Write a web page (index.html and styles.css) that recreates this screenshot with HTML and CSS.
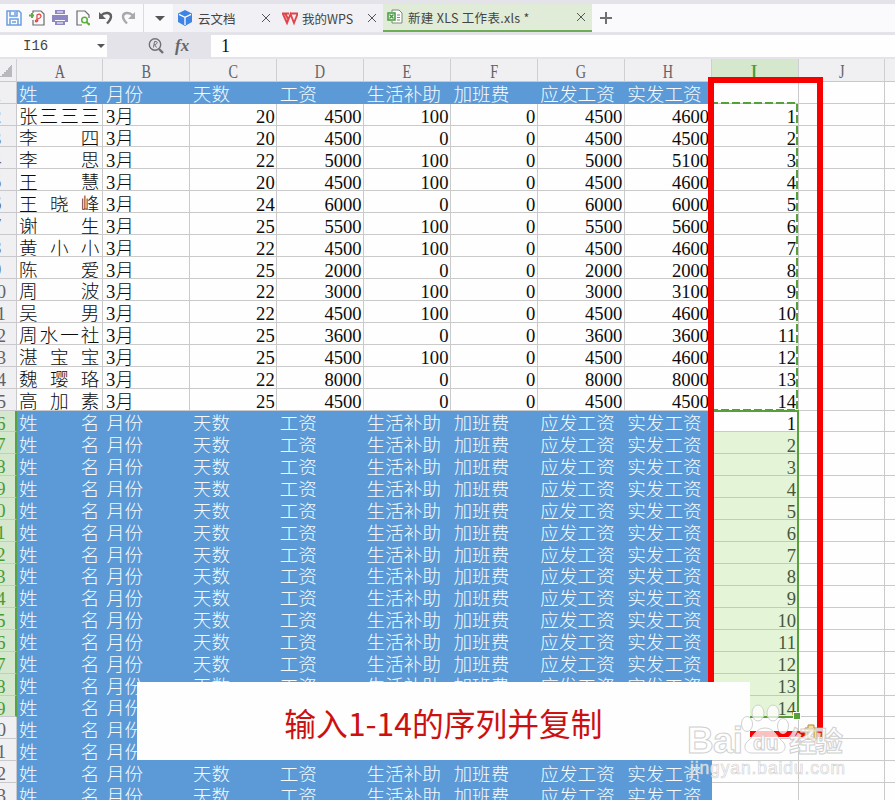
FILE: index.html
```
<!DOCTYPE html>
<html lang="zh">

<head>
  <meta charset="UTF-8">
  <meta name="viewport" content="width=device-width, initial-scale=1.0">
  <title>新建 XLS 工作表.xls</title>
  <link rel="stylesheet" href="styles.css">
</head>

<body>
  <header class="toolbar">
    <div class="tools">
      <svg class="icon" viewBox="0 0 16 16" fill="none" stroke="#6c9fe0" stroke-width="1.5">
        <path d="M1 1h12l2 2v12H1z" />
        <path d="M4 1v5h7V1M9 2v3M4 15v-6h8v6M6 12h4" />
      </svg>
      <svg class="icon" viewBox="0 0 16 16" fill="none" stroke="#6c6c6c" stroke-width="1.2">
        <path d="M4 3V1h8l3 3v11H4v-5" />
        <path d="M0 5.500h5M3 3v5" stroke="#5caf3d" stroke-width="2" />
        <path d="M8 12V5c3-2 5 .5 3.500 2.500C10.500 9 7 9 6.500 10.500S8 13 9 10" stroke="#e0403f" />
      </svg>
      <svg class="icon" viewBox="0 0 16 16" fill="#8d87c4">
        <path d="M3 0h10v4H3zM0 5h16v7h-3v-2H3v2H0zM3 11h10v4H3z" />
        <path d="M5 2h6M5 13h6" stroke="#fff" />
      </svg>
      <svg class="icon" viewBox="0 0 16 16" fill="none" stroke="#6c6c6c" stroke-width="1.2">
        <path d="M7 15H2V1h8l4 4v3M14 13v2" />
        <circle cx="9.500" cy="10" r="2.800" stroke="#5caf3d" stroke-width="1.500" />
        <path d="M11.500 12l3 3" stroke="#5caf3d" stroke-width="2" />
      </svg>
      <svg class="icon" viewBox="0 0 16 16">
        <path d="M3 5.500c4-4 10-3 10 1 0 3-2 5-4 7" fill="none" stroke="#606060" stroke-width="2.400" />
        <path d="M1 2v7h7z" fill="#606060" />
      </svg>
      <svg class="icon" viewBox="0 0 16 16">
        <path d="M12 5.500c-4-4-10-3-10 1 0 3 2 5 4 7" fill="none" stroke="#a9a9ab" stroke-width="2.400" />
        <path d="M14 2v7H7z" fill="#a9a9ab" />
      </svg>
    </div>
    <div class="more"><i class="caret"></i></div>
    <div class="tab tab-cloud">
      <svg class="icon" viewBox="0 0 16 16">
        <path d="M8 0l7 3.500v8.500L8 16l-7-4V3.500z" fill="#3d84e6" />
        <path d="M2 4.300l6 3 6-3M8 7.300V15" stroke="#fff" stroke-width="1.300" fill="none" />
      </svg>
      <span>云文档</span>
      <svg class="close" viewBox="0 0 8 8"><path d="M0 0l8 8M8 0L0 8" /></svg>
    </div>
    <div class="tab tab-wps">
      <svg class="icon" viewBox="0 0 16 16" fill="none" stroke="#e0444a" stroke-width="1.900">
        <path d="M0 3.500h7M1 4l4 9 3.500-9L12 13l3.500-9M9 3.500h7M3.500 4l2.500 5" />
      </svg>
      <span>我的WPS</span>
      <svg class="close" viewBox="0 0 8 8"><path d="M0 0l8 8M8 0L0 8" /></svg>
    </div>
    <div class="tab tab-active">
      <svg class="icon" viewBox="0 0 16 16" fill="none">
        <path d="M5 3V1h7l3 3v10H5v-2" fill="#fff" stroke="#7b8b76" />
        <path d="M10 6h3M10 8.500h3M10 11h3" stroke="#7b8b76" />
        <path d="M1 4h7v7H1z" fill="#fff" stroke="#43993a" stroke-width="1.500" />
        <path d="M2.500 5.500l4 4M6.500 5.500l-4 4" stroke="#43993a" stroke-width="1.400" />
      </svg>
      <span>新建 XLS 工作表.xls *</span>
      <svg class="close" viewBox="0 0 8 8"><path d="M0 0l8 8M8 0L0 8" /></svg>
    </div>
    <svg class="add" viewBox="0 0 12 12"><path d="M6 0v12M0 6h12" /></svg>
  </header>

  <section class="formula">
    <div class="name-box"><span>I16</span><i class="caret caret-small"></i></div>
    <div class="formula-tools">
      <svg class="search" viewBox="0 0 16 16" fill="none" stroke="#707074">
        <circle cx="7" cy="6.500" r="5.700" stroke-width="1.400" />
        <path d="M11 11l4 4" stroke-width="2.400" />
        <path d="M5.500 9.500l1-6h1.500c2 0 1.500 3-1.500 3l2 3" />
      </svg>
      <span class="fx">fx</span>
    </div>
    <div class="formula-input">1</div>
  </section>

  <main class="sheet">
    <div class="grid" id="grid"></div>
    <svg class="copied"><rect x="1" y="1" width="87" height="307" /></svg>
    <div class="selection"></div>
    <div class="frame"></div>
    <svg class="paste" viewBox="0 0 16 16">
      <path d="M2 4h3V1h6v3h3v11H2z" fill="#f7df93" stroke="#b28b35" />
      <path d="M5 7h6v7H5z" fill="#fff" stroke="#b28b35" />
    </svg>
    <p class="caption">输入1-14的序列并复制</p>
    <svg class="watermark" viewBox="0 0 170 90">
      <g class="mark">
        <text x="2" y="53" font-size="37" textLength="56">Bai</text>
        <ellipse cx="62" cy="24" rx="5.500" ry="7.500" />
        <ellipse cx="73" cy="13" rx="6" ry="8" />
        <ellipse cx="88" cy="13" rx="6" ry="8" />
        <ellipse cx="98" cy="26" rx="5.500" ry="7.500" />
        <path d="M80 28c9 0 11 8 17 13s3 13-6 12H69c-9 1-12-7-6-12s8-13 17-13z" />
        <text x="68" y="50" font-size="21">du</text>
        <text x="104" y="52" font-size="28" textLength="54">经验</text>
      </g>
      <text class="mark site" x="5" y="74" font-size="17.500" textLength="155">jingyan.baidu.com</text>
    </svg>
  </main>

  <script>
    const d = document,
    $grid = d.getElementById("grid"),
    $fragment = d.createDocumentFragment(),
    COLS = ["A", "B", "C", "D", "E", "F", "G", "H", "I", "J", ""],
    HEAD = ["姓名", "月份", "天数", "工资", "生活补助", "加班费", "应发工资", "实发工资"],
    PEOPLE = [
      ["张三三三", 20, 4500, 100, 0, 4500, 4600],
      ["李四", 20, 4500, 0, 0, 4500, 4500],
      ["李思", 22, 5000, 100, 0, 5000, 5100],
      ["王慧", 20, 4500, 100, 0, 4500, 4600],
      ["王晓峰", 24, 6000, 0, 0, 6000, 6000],
      ["谢生", 25, 5500, 100, 0, 5500, 5600],
      ["黄小小", 22, 4500, 100, 0, 4500, 4600],
      ["陈爱", 25, 2000, 0, 0, 2000, 2000],
      ["周波", 22, 3000, 100, 0, 3000, 3100],
      ["吴男", 22, 4500, 100, 0, 4500, 4600],
      ["周水一社", 25, 3600, 0, 0, 3600, 3600],
      ["湛宝宝", 25, 4500, 100, 0, 4500, 4600],
      ["魏璎珞", 22, 8000, 0, 0, 8000, 8000],
      ["高加素", 25, 4500, 0, 0, 4500, 4500]
    ];

    function addCell(text, className) {
      const $cell = d.createElement("div"),
      $text = d.createElement("span");
      $cell.className = className;
      $text.textContent = text;
      $cell.appendChild($text);
      $fragment.appendChild($cell);
    }

    // column letters
    addCell("", "col-head corner");
    COLS.forEach(c => addCell(c, c === "I" ? "col-head col-on" : "col-head"));

    for (let row = 1; row <= 33; row++) {
      const person = row > 1 && row < 16 ? PEOPLE[row - 2] : null,
      selected = row >= 16 && row <= 29;

      addCell(row, selected ? "row-head row-on" : "row-head");

      if (person) {
        addCell(person[0], "cell name");
        addCell("3月", "cell");
        person.slice(1).forEach(n => addCell(n, "cell num"));
      } else {
        HEAD.forEach((h, i) => addCell(h, i === 0 ? "cell title name" : "cell title"));
      }

      // column I: 1-14 and its copy
      if (person) addCell(row - 1, "cell num");
      else if (selected) addCell(row - 15, row === 16 ? "cell num" : "cell num picked");
      else addCell("", "cell");

      addCell("", "cell");
      addCell("", "cell");
    }
    $grid.appendChild($fragment);
  </script>
</body>

</html>
```
FILE: styles.css
```
*,
*:after,
*:before {
  box-sizing: border-box;
}

body {
  margin: 0;
  width: 895px;
  height: 800px;
  overflow: hidden;
  background-color: #e4e3e9;
  font-family: "Noto Sans CJK SC", sans-serif;
  font-size: 12.5px;
  color: #444;
}

.toolbar {
  display: flex;
  align-items: stretch;
  height: 32px;
  padding-top: 4px;
  background-color: #fafafc;
  box-shadow: inset 0 4px #e4e3e9;
}

.icon {
  flex: none;
  width: 16px;
  height: 16px;
}

.tools {
  display: flex;
  align-items: center;
  gap: 7px;
  width: 144px;
  padding-left: 6px;
  border-right: 1px solid #dcdce0;
}

.more {
  display: flex;
  align-items: center;
  justify-content: center;
  width: 29px;
  padding-left: 2px;
}

.caret {
  flex: none;
  border: 5px solid transparent;
  border-top-color: #555;
  border-bottom: 0;
}

.caret-small {
  border-width: 4px;
  border-bottom: 0;
}

.tab {
  display: flex;
  align-items: center;
  white-space: nowrap;
  background-color: #f1f0f4;
}

.tab .close {
  margin-left: auto;
}

.tab-cloud {
  width: 105px;
  padding: 0 8px 0 4px;
  gap: 5px;
}

.tab-wps {
  width: 105px;
  padding: 0 7px 0 4px;
  gap: 4px;
}

.tab-active {
  width: 209px;
  padding: 0 7px 0 4px;
  gap: 5px;
  letter-spacing: .3px;
  background-color: #e0ecd8;
  border-bottom: 2px solid #6fac58;
}

.close {
  width: 8px;
  height: 8px;
  fill: none;
  stroke: #555;
  overflow: visible;
}

.add {
  width: 12px;
  height: 12px;
  margin: 8px 0 0 8px;
  stroke: #707070;
  stroke-width: 2;
}

.formula {
  display: flex;
  height: 27px;
  padding: 3px 0 2px;
  font-family: "Liberation Mono", monospace;
}

.name-box {
  display: flex;
  align-items: center;
  justify-content: space-between;
  width: 107px;
  padding: 0 2px 0 23px;
  background-color: #fefefe;
  font-size: 14px;
}

.formula-tools {
  display: flex;
  align-items: center;
  gap: 11px;
  width: 104px;
  padding-left: 41px;
}

.search {
  width: 16px;
  height: 16px;
}

.fx {
  font: italic bold 17px/20px "Liberation Serif", serif;
  color: #66666a;
}

.formula-input {
  flex: 1;
  padding: 1px 0 0 10px;
  background-color: #fefefe;
  font: 18px/21px "Liberation Serif", serif;
  color: #111;
}

.sheet {
  position: relative;
  height: 741px;
  overflow: hidden;
  background-color: #fefefe;
}

.grid {
  display: grid;
  grid-template-columns: 38.5px repeat(11, 86.9px);
  grid-template-rows: 22.7px;
  grid-auto-rows: 21.93px;
  width: 1000px;
  margin-left: -22px;
  font: 18.6px/22px "Liberation Serif", "Noto Sans CJK SC", serif;
  font-weight: 300;
  color: #0c0c0c;
}

.col-head {
  padding-top: 2px;
  text-align: center;
  font-size: 19px;
  color: #626266;
  background-color: #f0eff2;
  border-right: 1px solid #cfced3;
  border-bottom: 1px solid #c9c8cd;
}

.col-head span {
  display: inline-block;
  transform: scaleX(.75);
}

.col-on {
  color: #4a9a30;
  background-color: #d5e7cd;
}

.col-on span {
  transform: scaleX(1.2);
}

.corner {
  background-image: linear-gradient(135deg, transparent 50%, #b9b9bd 50%);
  background-repeat: no-repeat;
  background-size: 12px 12px;
  background-position: 22px 6px;
}

.row-head {
  padding-top: 2px;
  text-align: center;
  color: #626266;
  background-color: #f0eff2;
  border-right: 1px solid #c9c8cd;
  border-bottom: 1px solid #c9c8cd;
}

.row-on {
  color: #4a9a30;
  background-color: #d5e7cd;
  border-right: 2px solid #57a33c;
}

.cell {
  padding: 2.5px 1.5px 0 2.5px;
  overflow: hidden;
  white-space: nowrap;
  border-right: 1px solid #cacaca;
  border-bottom: 1px solid #cacaca;
}

.num {
  text-align: right;
}

.name {
  padding-right: 3px;
  text-align: justify;
  text-align-last: justify;
  white-space: normal;
}

.title {
  color: #f6faff;
  background-color: #5b9ad6;
  border-color: #5b9ad6;
}

.picked {
  color: #47583c;
  background-color: #e4f4d7;
  border-bottom-color: #bfceb5;
}

/* marching ants round the copied cells */
.copied {
  position: absolute;
  left: 709px;
  top: 43px;
  width: 90px;
  height: 310px;
  fill: none;
  stroke: #55a038;
  stroke-width: 2;
  stroke-dasharray: 8 3;
}

.selection {
  position: absolute;
  left: 711px;
  top: 351px;
  width: 88px;
  height: 308px;
  border: 2px solid #55a038;
}

.selection:after {
  content: "";
  position: absolute;
  right: -3px;
  bottom: -3px;
  width: 6px;
  height: 6px;
  background-color: #55a038;
  outline: 1px solid #fff;
}

.frame {
  position: absolute;
  left: 708px;
  top: 18px;
  width: 115px;
  height: 660px;
  border: 6px solid #f90000;
}

.paste {
  position: absolute;
  left: 803px;
  top: 665px;
  width: 16px;
  height: 16px;
}

.caption {
  position: absolute;
  left: 137px;
  top: 623px;
  width: 613px;
  height: 78px;
  margin: 0;
  text-align: center;
  font-size: 31.8px;
  line-height: 80px;
  color: #cc1111;
  background-color: #fefefe;
}

.watermark {
  position: absolute;
  left: 685px;
  top: 641px;
  width: 170px;
  height: 90px;
  font-family: "Liberation Sans", "Noto Sans CJK SC", sans-serif;
  font-weight: bold;
}

.mark {
  fill: rgba(255, 255, 255, .75);
  stroke: #d0d0d0;
  stroke-width: 1;
}

.site {
  font-weight: normal;
  stroke-width: .6;
}
```
